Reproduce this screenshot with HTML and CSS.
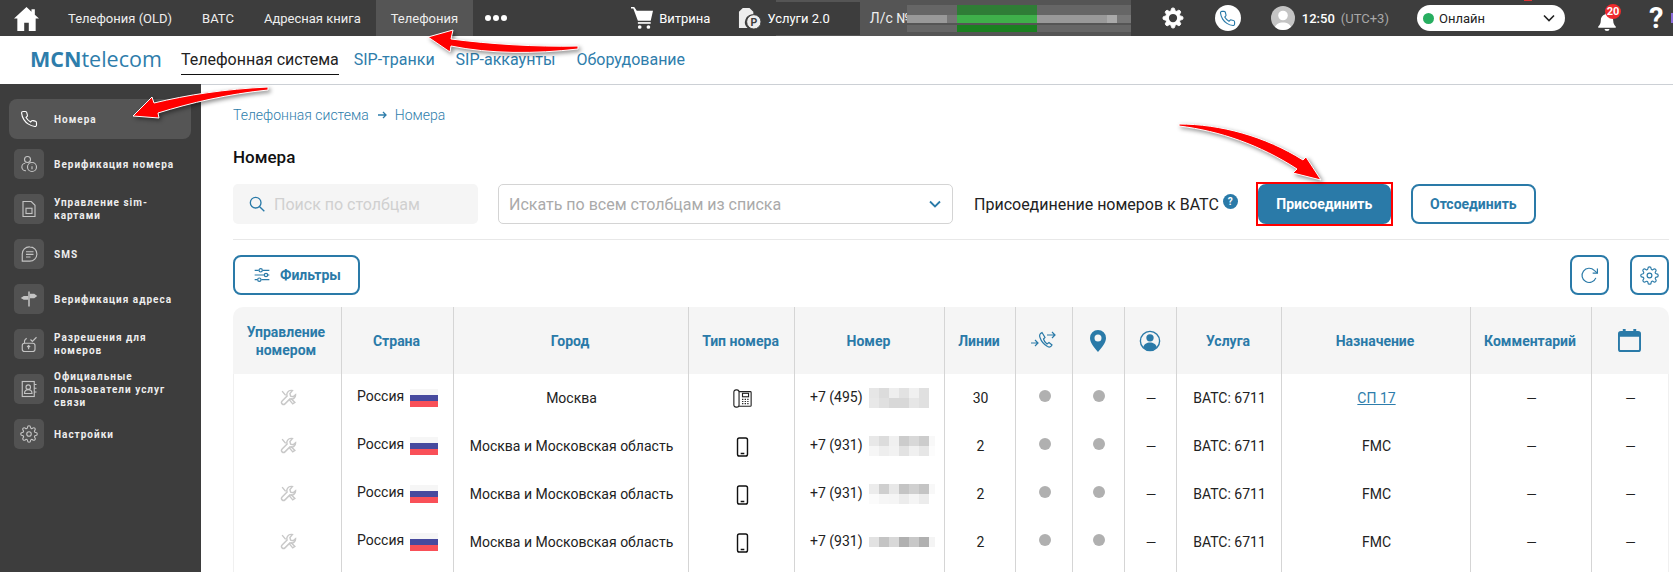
FILE: index.html
```html
<!DOCTYPE html>
<html>
<head>
  <meta charset="utf-8">
  <link rel="stylesheet" href="styles.css">
</head>
<body>
  <svg class="defs" width="0" height="0">
    <symbol id="i-phone" viewBox="0 0 24 24"><path d="M22 16.92v3a2 2 0 0 1-2.18 2 19.79 19.79 0 0 1-8.63-3.07 19.5 19.5 0 0 1-6-6 19.79 19.79 0 0 1-3.07-8.67A2 2 0 0 1 4.11 2h3a2 2 0 0 1 2 1.72 12.84 12.84 0 0 0 .7 2.81 2 2 0 0 1-.45 2.11L8.09 9.91a16 16 0 0 0 6 6l1.27-1.27a2 2 0 0 1 2.11-.45 12.84 12.84 0 0 0 2.81.7A2 2 0 0 1 22 16.92z"/></symbol>
    <symbol id="i-gear" viewBox="0 0 24 24"><circle cx="12" cy="12" r="3"/><path d="M19.4 15a1.65 1.65 0 0 0 .33 1.82l.06.06a2 2 0 0 1 0 2.83 2 2 0 0 1-2.83 0l-.06-.06a1.65 1.65 0 0 0-1.82-.33 1.65 1.65 0 0 0-1 1.51V21a2 2 0 0 1-2 2 2 2 0 0 1-2-2v-.09A1.65 1.65 0 0 0 9 19.4a1.65 1.65 0 0 0-1.82.33l-.06.06a2 2 0 0 1-2.83 0 2 2 0 0 1 0-2.83l.06-.06a1.65 1.65 0 0 0 .33-1.82 1.65 1.65 0 0 0-1.51-1H3a2 2 0 0 1-2-2 2 2 0 0 1 2-2h.09A1.65 1.65 0 0 0 4.6 9a1.65 1.65 0 0 0-.33-1.82l-.06-.06a2 2 0 0 1 0-2.83 2 2 0 0 1 2.83 0l.06.06a1.65 1.65 0 0 0 1.82.33H9a1.65 1.65 0 0 0 1-1.51V3a2 2 0 0 1 2-2 2 2 0 0 1 2 2v.09a1.65 1.65 0 0 0 1 1.51 1.65 1.65 0 0 0 1.82-.33l.06-.06a2 2 0 0 1 2.83 0 2 2 0 0 1 0 2.83l-.06.06a1.65 1.65 0 0 0-.33 1.82V9a1.65 1.65 0 0 0 1.51 1H21a2 2 0 0 1 2 2 2 2 0 0 1-2 2h-.09a1.65 1.65 0 0 0-1.51 1z"/></symbol>
    <symbol id="i-wrench" viewBox="0 0 24 24"><path d="M16 2a6 6 0 0 0-6 8L3 17a2.800 2.800 0 0 0 4 4l7-7a6 6 0 0 0 8-6l-3.500 3-3.500-1-1-3.500L17.500 2.200z"/><path d="M3 3l5 6M13 15l5 6 3-2-6-6"/></symbol>
    <symbol id="i-mobile" viewBox="0 0 14 22"><rect x="1.500" y="1" width="11" height="20" rx="2"/><path d="M5 18.200h4" stroke-width="1.800"/></symbol>
    <symbol id="i-desk" viewBox="0 0 22 22"><rect x="1" y="1" width="6" height="20" rx="2.500"/><path d="M7 3h13a1 1 0 0 1 1 1v15a1 1 0 0 1-1 1H7"/><rect x="11" y="5" width="7" height="4"/><path d="M10.500 12h1.500m1.500 0H15m1.500 0H18M10.500 14.500h1.500m1.500 0H15m1.500 0H18M10.500 17h1.500m1.500 0H15m1.500 0H18"/></symbol>
  </svg>

  <div class="page">
    <header class="topbar">
      <svg class="home" viewBox="0 0 24 24"><path d="M12 1 0 12h3.200v12h6.600v-8h4.400v8h6.600V12H24l-4-3.700V3h-3.200v2.400z"/></svg>
      <nav class="topnav">
        <a>Телефония (OLD)</a>
        <a>ВАТС</a>
        <a>Адресная книга</a>
        <a class="active">Телефония</a>
      </nav>
      <div class="dots"><i></i><i></i><i></i></div>

      <svg class="cart" viewBox="0 0 24 24"><path d="M0 0h3.500l2.800 4H24l-2.500 11H7.500L2.500 1.600H0z"/><rect x="7.500" y="16.500" width="14" height="1.800"/><circle cx="9.500" cy="21.800" r="2"/><circle cx="19" cy="21.800" r="2"/></svg>
      <span class="top-link">Витрина</span>
      <svg class="services" viewBox="0 0 24 24"><path d="M5 1h7l4 4v3a8 8 0 0 0-6 14H1V5z"/><circle cx="16.500" cy="15.500" r="7.500"/><text x="16.500" y="19.500" text-anchor="middle" class="services-p">P</text></svg>
      <span class="top-link">Услуги 2.0</span>

      <div class="account">
        <span class="account-label">Л/с №</span>
        <span class="account-blur"></span>
      </div>

      <svg class="top-gear" viewBox="0 0 24 24"><use href="#i-gear"/><circle class="top-gear-hole" cx="12" cy="12" r="4.500"/></svg>
      <span class="call-btn"><svg viewBox="0 0 24 24"><use href="#i-phone"/></svg></span>
      <span class="avatar"><svg viewBox="0 0 24 24"><circle cx="12" cy="9.500" r="4.800"/><path d="M3 24c1-6 5-7.500 9-7.500s8 1.500 9 7.500z"/></svg></span>
      <span class="clock">12:50</span>
      <span class="zone">(UTC+3)</span>
      <div class="status">
        <i class="status-dot"></i>
        <span>Онлайн</span>
        <svg viewBox="0 0 12 8"><path d="M1 1.500 6 6.500l5-5"/></svg>
      </div>
      <div class="bell">
        <svg viewBox="0 0 24 24"><path d="M12 2a2 2 0 0 1 2 2c4 1 5.500 4 5.500 8 0 3 1.500 5 3 6.500v1.500h-21v-1.500c1.500-1.500 3-3.500 3-6.500 0-4 1.500-7 5.500-8a2 2 0 0 1 2-2z"/><path d="M9 21.500h6a3 2.500 0 0 1-6 0z"/></svg>
        <b class="badge">20</b>
      </div>
      <span class="question">?</span>
    </header>

    <div class="subbar">
      <div class="logo"><b>MCN</b>telecom</div>
      <a class="tab active">Телефонная система</a>
      <a class="tab">SIP-транки</a>
      <a class="tab">SIP-аккаунты</a>
      <a class="tab">Оборудование</a>
    </div>

    <div class="main">
      <aside class="sidebar">
        <a class="side-item active">
          <span class="side-icon"><svg viewBox="0 0 24 24"><use href="#i-phone"/></svg></span>
          <span>Номера</span>
        </a>
        <a class="side-item">
          <span class="side-icon"><svg viewBox="0 0 24 24"><circle cx="10" cy="6" r="4"/><path d="M8 21a5 5 0 0 1-1-10"/><circle cx="16" cy="16" r="6"/><path d="M16 15v4M16 12.500v.5"/></svg></span>
          <span>Верификация номера</span>
        </a>
        <a class="side-item">
          <span class="side-icon"><svg viewBox="0 0 24 24"><path d="M4 2h11l5 5v15H4z"/><rect x="8" y="11" width="8" height="7"/></svg></span>
          <span>Управление sim-картами</span>
        </a>
        <a class="side-item">
          <span class="side-icon"><svg viewBox="0 0 24 24"><path d="M13 2.500a9.500 9.500 0 1 1 0 19H3v-9A9.500 9.500 0 0 1 13 2.500z"/><path d="M8 9h10M8 12.500h10M8 16h6"/></svg></span>
          <span>SMS</span>
        </a>
        <a class="side-item">
          <span class="side-icon"><svg class="solid" viewBox="0 0 24 24"><path d="M11 2h2v20h-2z"/><path d="M13 5h6l4 3-4 3h-6zM11 8H5L1 10.500 5 13h6z"/></svg></span>
          <span>Верификация адреса</span>
        </a>
        <a class="side-item">
          <span class="side-icon"><svg viewBox="0 0 24 24"><rect x="3" y="11" width="17" height="11" rx="3"/><path d="M11.500 19v-5M9.500 16l2-2 2 2M6 11V8a5 5 0 0 1 3-3.500M14 6l2.500 2.500L22 3"/></svg></span>
          <span>Разрешения для номеров</span>
        </a>
        <a class="side-item">
          <span class="side-icon"><svg viewBox="0 0 24 24"><rect x="3" y="2" width="16" height="20"/><circle cx="11" cy="9.500" r="3"/><path d="M6 18c0-7 10-7 10 0zM19 6h3M19 11h3M19 16h3"/></svg></span>
          <span>Официальные пользователи услуг связи</span>
        </a>
        <a class="side-item">
          <span class="side-icon"><svg viewBox="0 0 24 24"><use href="#i-gear"/></svg></span>
          <span>Настройки</span>
        </a>
      </aside>

      <main class="content">
        <div class="breadcrumbs">
          <a>Телефонная система</a>
          <svg class="crumb-arrow" viewBox="0 0 9 8"><path d="M0 4h8M5 1l3 3-3 3"/></svg>
          <a>Номера</a>
        </div>
        <h1 class="title">Номера</h1>

        <div class="toolbar">
          <div class="search">
            <svg viewBox="0 0 24 24"><circle cx="10" cy="10" r="8"/><path d="m16 16 7 7"/></svg>
            <span>Поиск по столбцам</span>
          </div>
          <div class="column-select">
            <span>Искать по всем столбцам из списка</span>
            <svg viewBox="0 0 12 8"><path d="M1 1.500 6 6.500l5-5"/></svg>
          </div>
          <span class="attach-label">Присоединение номеров к ВАТС</span>
          <span class="help">?</span>
          <div class="highlight"><button class="btn btn-primary">Присоединить</button></div>
          <button class="btn btn-detach">Отсоединить</button>
        </div>

        <div class="actions">
          <button class="btn btn-filter">
            <svg viewBox="0 0 24 24"><path d="M1 5h6m6 0h10M1 12h14m6 0h2M1 19h4m6 0h12"/><circle cx="10" cy="5" r="2.500"/><circle cx="18" cy="12" r="2.500"/><circle cx="8" cy="19" r="2.500"/></svg>
            Фильтры
          </button>
          <div class="action-icons">
            <button class="btn btn-icon"><svg viewBox="0 0 24 24"><path d="M20 15a9 9 0 1 1-2-9.500L22 9"/><path d="M22 3v6h-6"/></svg></button>
            <button class="btn btn-icon"><svg viewBox="0 0 24 24"><use href="#i-gear"/></svg></button>
          </div>
        </div>

        <table class="numbers">
          <colgroup>
            <col class="c1"><col class="c2"><col class="c3"><col class="c4"><col class="c5"><col class="c6"><col class="c7">
            <col class="c8"><col class="c9"><col class="c10"><col class="c11"><col class="c12"><col class="c13">
          </colgroup>
          <thead>
            <tr>
              <th>Управление номером</th>
              <th>Страна</th>
              <th>Город</th>
              <th>Тип номера</th>
              <th>Номер</th>
              <th>Линии</th>
              <th><svg class="th-flow" viewBox="0 0 26 20"><path d="M1 12h7M5 9l3 3-3 3M17 4h8M22 1l3 3-3 3"/><path d="M12 1.500c-2 1-3 2.500-2 5 1 3 4 7 7.500 9 2 1 3.500.5 4.500-1.500l-3-2.500-2 1.500c-1.500-1-3-3-3.500-5l1.500-1.500z"/></svg></th>
              <th><svg class="th-pin" viewBox="0 0 16 22"><path fill-rule="evenodd" d="M8 0a8 8 0 0 1 8 8c0 5-4 9-8 14C4 17 0 13 0 8a8 8 0 0 1 8-8zm0 4.500a3.500 3.500 0 1 0 0 7 3.500 3.500 0 0 0 0-7z"/></svg></th>
              <th><svg class="th-user" viewBox="0 0 24 24"><circle class="user-ring" cx="12" cy="12" r="10.500"/><circle cx="12" cy="8.500" r="4"/><path d="M4.500 19c1-4 4-5.500 7.500-5.500s6.500 1.500 7.500 5.500a10.500 10.500 0 0 1-15 0z"/></svg></th>
              <th>Услуга</th>
              <th>Назначение</th>
              <th>Комментарий</th>
              <th><svg class="th-cal" viewBox="0 0 24 24"><path d="M5 0h3v2h8V0h3v2h2a3 3 0 0 1 3 3v16a3 3 0 0 1-3 3H3a3 3 0 0 1-3-3V5a3 3 0 0 1 3-3h2zM2 8v13a1 1 0 0 0 1 1h18a1 1 0 0 0 1-1V8z"/></svg></th>
            </tr>
          </thead>
          <tbody>
            <tr>
              <td><svg class="wrench" viewBox="0 0 24 24"><use href="#i-wrench"/></svg></td>
              <td class="left">Россия<span class="flag"></span></td>
              <td>Москва</td>
              <td><svg class="desk" viewBox="0 0 22 22"><use href="#i-desk"/></svg></td>
              <td class="left">+7 (495)<span class="blur blur-1"></span></td>
              <td>30</td>
              <td><i class="dot"></i></td>
              <td><i class="dot"></i></td>
              <td class="dash">—</td>
              <td>ВАТС: 6711</td>
              <td><a class="link">СП 17</a></td>
              <td class="dash">—</td>
              <td class="dash">—</td>
            </tr>
            <tr>
              <td><svg class="wrench" viewBox="0 0 24 24"><use href="#i-wrench"/></svg></td>
              <td class="left">Россия<span class="flag"></span></td>
              <td>Москва и Московская область</td>
              <td><svg class="mobile" viewBox="0 0 14 22"><use href="#i-mobile"/></svg></td>
              <td class="left">+7 (931)<span class="blur blur-2"></span></td>
              <td>2</td>
              <td><i class="dot"></i></td>
              <td><i class="dot"></i></td>
              <td class="dash">—</td>
              <td>ВАТС: 6711</td>
              <td>FMC</td>
              <td class="dash">—</td>
              <td class="dash">—</td>
            </tr>
            <tr>
              <td><svg class="wrench" viewBox="0 0 24 24"><use href="#i-wrench"/></svg></td>
              <td class="left">Россия<span class="flag"></span></td>
              <td>Москва и Московская область</td>
              <td><svg class="mobile" viewBox="0 0 14 22"><use href="#i-mobile"/></svg></td>
              <td class="left">+7 (931)<span class="blur blur-3"></span></td>
              <td>2</td>
              <td><i class="dot"></i></td>
              <td><i class="dot"></i></td>
              <td class="dash">—</td>
              <td>ВАТС: 6711</td>
              <td>FMC</td>
              <td class="dash">—</td>
              <td class="dash">—</td>
            </tr>
            <tr>
              <td><svg class="wrench" viewBox="0 0 24 24"><use href="#i-wrench"/></svg></td>
              <td class="left">Россия<span class="flag"></span></td>
              <td>Москва и Московская область</td>
              <td><svg class="mobile" viewBox="0 0 14 22"><use href="#i-mobile"/></svg></td>
              <td class="left">+7 (931)<span class="blur blur-4"></span></td>
              <td>2</td>
              <td><i class="dot"></i></td>
              <td><i class="dot"></i></td>
              <td class="dash">—</td>
              <td>ВАТС: 6711</td>
              <td>FMC</td>
              <td class="dash">—</td>
              <td class="dash">—</td>
            </tr>
            <tr>
              <td></td><td></td><td></td><td></td><td></td><td></td><td></td><td></td><td></td><td></td><td></td><td></td><td></td>
            </tr>
          </tbody>
        </table>
      </main>
    </div>

    <!-- red annotation arrows drawn over the screenshot -->
    <svg class="annotations" viewBox="0 0 1673 572">
      <path d="M578 46C535 47 490 44 451 39L453 30 428 37 450 52 451 46C490 54 535 54 578 49z"/>
      <path d="M268 87C225 89 187 95 154 103L152 97 133 116 159 118 158 113C190 103 228 94 268 90z"/>
      <path d="M1179 124C1220 124 1265 136 1303 160L1306 157 1321 180 1293 173 1297 169C1260 145 1220 131 1179 126z"/>
    </svg>
  </div>
</body>
</html>
```

FILE: styles.css
```css
* {
  box-sizing: border-box;
}

html, body {
  margin: 0;
  height: 572px;
  overflow: hidden;
  background-color: #fff;
  font-family: Roboto, "Liberation Sans", sans-serif;
  font-size: 14px;
  color: #222;
}

a {
  text-decoration: none;
}

.defs {
  display: block;
  height: 0;
}

.page {
  position: relative;
  width: 1673px;
  height: 572px;
  overflow: hidden;
}

/* top bar */
.topbar {
  position: relative;
  display: flex;
  align-items: center;
  height: 36px;
  background:
    linear-gradient(#555, #555) 776px 0 / 84px 2px no-repeat,
    linear-gradient(#555, #555) 776px 35px / 84px 1px no-repeat,
    linear-gradient(#d33, #d33) 1524px 0 / 8px 1px no-repeat,
    linear-gradient(#8a6cd8, #8a6cd8) 1671px 13px / 2px 10px no-repeat,
    #3d3d3d;
  color: #eee;
  font-size: 13px;
  white-space: nowrap;
  overflow: hidden;
}

.home {
  width: 25px;
  height: 25px;
  margin-left: 14px;
  fill: #fff;
  flex: none;
}

.topnav {
  display: flex;
  height: 36px;
  margin-left: 14px;
  flex: none;
}

.topnav a {
  display: flex;
  align-items: center;
  padding: 0 15px;
  font-size: 13px;
}

.topnav a.active {
  background-color: #555;
}

.dots {
  display: flex;
  gap: 2px;
  margin-left: 12px;
  flex: none;
}

.dots i {
  width: 6px;
  height: 6px;
  border-radius: 50%;
  background-color: #fff;
}

.cart {
  width: 22px;
  height: 22px;
  margin-left: 124px;
  fill: #fff;
  flex: none;
}

.top-link {
  margin-left: 6px;
  color: #fff;
  font-weight: 400;
  flex: none;
}

.services {
  width: 23px;
  height: 23px;
  margin-left: 28px;
  fill: #eee;
  flex: none;
}

.services circle {
  stroke: #3d3d3d;
  stroke-width: 1;
}

.services-p {
  font-size: 11px;
  font-weight: 700;
  fill: #3d3d3d;
}

.account {
  display: flex;
  align-items: center;
  width: 271px;
  height: 36px;
  margin-left: 30px;
  padding-left: 10px;
  background-color: #555;
  font-size: 14px;
  flex: none;
}

.account-label {
  width: 37px;
  flex: none;
}

.account-blur {
  width: 224px;
  height: 27px;
  flex: none;
  background:
    linear-gradient(90deg, #666 0 50px, #2f7d36 50px 130px, #666 130px) top / 100% 10px no-repeat,
    linear-gradient(90deg, #999 0 40px, #777 40px 50px, #3fb04a 50px 130px, #999 130px 200px, #aaa 200px 210px, #777 210px) center / 100% 10px no-repeat,
    linear-gradient(90deg, #666 0 50px, #1a8020 50px 130px, #666 130px) bottom / 100% 7px no-repeat;
}

.top-gear {
  width: 22px;
  height: 24px;
  margin-left: 31px;
  fill: #fff;
  stroke: #fff;
  stroke-width: 1;
  flex: none;
}

.top-gear-hole {
  fill: #3d3d3d;
  stroke: none;
}

.call-btn {
  display: flex;
  align-items: center;
  justify-content: center;
  width: 26px;
  height: 26px;
  margin-left: 31px;
  border-radius: 50%;
  background-color: #fff;
  flex: none;
}

.call-btn svg {
  width: 17px;
  height: 17px;
  fill: none;
  stroke: #2a7aa8;
  stroke-width: 1.600;
}

.avatar {
  width: 24px;
  height: 24px;
  margin-left: 30px;
  border-radius: 50%;
  background-color: #c4c4c4;
  overflow: hidden;
  flex: none;
}

.avatar svg {
  display: block;
  fill: #fff;
}

.clock {
  margin-left: 7px;
  color: #fff;
  font-size: 13px;
  font-weight: 500;
  flex: none;
}

.zone {
  margin-left: 6px;
  color: #a8a8a8;
  font-size: 13px;
  flex: none;
}

.status {
  display: flex;
  align-items: center;
  width: 148px;
  height: 26px;
  margin-left: 28px;
  padding: 0 10px 0 6px;
  border-radius: 13px;
  background-color: #fff;
  color: #222;
  font-size: 13px;
  flex: none;
}

.status-dot {
  width: 11px;
  height: 11px;
  margin-right: 5px;
  border-radius: 50%;
  background-color: #27ae60;
}

.status svg {
  width: 12px;
  height: 8px;
  margin-left: auto;
  fill: none;
  stroke: #222;
  stroke-width: 1.600;
}

.bell {
  position: relative;
  width: 20px;
  height: 25px;
  margin-left: 32px;
  flex: none;
}

.bell svg {
  position: absolute;
  left: 0;
  top: 4px;
  width: 20px;
  height: 22px;
  fill: #fff;
}

.badge {
  position: absolute;
  left: 8px;
  top: -2px;
  width: 16px;
  height: 15px;
  border-radius: 50%;
  background-color: #ef2b2d;
  color: #fff;
  font-size: 11px;
  line-height: 15px;
  text-align: center;
}

.question {
  margin-left: 32px;
  color: #fff;
  font-size: 29px;
  font-weight: 700;
  line-height: 36px;
  flex: none;
}

/* second bar */
.subbar {
  display: flex;
  align-items: flex-start;
  height: 49px;
  padding-left: 30px;
  border-bottom: 1px solid #ccd0d5;
}

.logo {
  margin-top: 9px;
  width: 151px;
  color: #2e7dab;
  font-family: "Open Sans", sans-serif;
  font-size: 21.500px;
  line-height: 28px;
  white-space: nowrap;
}

.tab {
  margin-top: 15px;
  margin-right: 21px;
  height: 24px;
  color: #2e7dab;
  font-size: 16px;
  line-height: 18px;
}

.tab.active {
  margin-right: 15px;
  color: #222;
  border-bottom: 1px solid #111;
}

/* sidebar */
.main {
  display: flex;
  height: 488px;
  margin-top: -1px;
}

.sidebar {
  display: flex;
  flex-direction: column;
  gap: 5px;
  width: 201px;
  padding: 15px 10px 0 9px;
  background-color: #3d3d3d;
  flex: none;
}

.side-item {
  display: flex;
  align-items: center;
  gap: 10px;
  height: 40px;
  padding: 5px;
  border-radius: 8px;
  color: #eee;
  font-size: 10px;
  font-weight: 700;
  letter-spacing: 1px;
  line-height: 13px;
}

.side-item.active {
  background-color: #555;
}

.side-icon {
  display: flex;
  align-items: center;
  justify-content: center;
  width: 30px;
  height: 30px;
  border-radius: 5px;
  background-color: #525252;
  flex: none;
}

.side-item.active .side-icon {
  background-color: transparent;
}

.side-icon svg {
  width: 18px;
  height: 18px;
  fill: none;
  stroke: #c4c4c4;
  stroke-width: 1.500;
}

.side-item.active .side-icon svg {
  stroke: #fff;
}

.side-icon svg.solid {
  fill: #c4c4c4;
  stroke: none;
}

/* content */
.content {
  flex: 1;
  padding: 22px 4px 0 32px;
  min-width: 0;
}

.breadcrumbs {
  display: flex;
  align-items: center;
  height: 18px;
  color: #2e7dab;
  font-size: 14px;
  font-weight: 300;
}

.crumb-arrow {
  width: 9px;
  height: 8px;
  margin: 0 8px 0 9px;
  fill: none;
  stroke: #2e7dab;
  stroke-width: 1.300;
}

.title {
  margin: 23px 0 0;
  color: #111;
  font-size: 17px;
  font-weight: 500;
  line-height: 20px;
}

.toolbar {
  display: flex;
  align-items: center;
  height: 56px;
  margin-top: 17px;
  padding-bottom: 15px;
  border-bottom: 1px solid #e8e8e8;
}

.search {
  display: flex;
  align-items: center;
  gap: 9px;
  width: 245px;
  height: 40px;
  padding-left: 16px;
  border-radius: 5px;
  background-color: #f5f5f5;
  color: #d0d0d0;
  font-size: 16px;
}

.search svg {
  width: 16px;
  height: 16px;
  fill: none;
  stroke: #2a7aa8;
  stroke-width: 2;
}

.column-select {
  display: flex;
  align-items: center;
  justify-content: space-between;
  width: 455px;
  height: 40px;
  margin-left: 20px;
  padding: 0 11px 0 10px;
  border: 1px solid #d4d4d4;
  border-radius: 5px;
  color: #aaa;
  font-size: 16px;
}

.column-select svg {
  width: 12px;
  height: 8px;
  fill: none;
  stroke: #2a7aa8;
  stroke-width: 1.800;
}

.attach-label {
  margin-left: 21px;
  color: #222;
  font-size: 16px;
  white-space: nowrap;
}

.help {
  width: 15px;
  height: 15px;
  margin: 0 0 5px 4px;
  border-radius: 50%;
  background-color: #2a7aa8;
  color: #fff;
  font-size: 10px;
  font-weight: 700;
  line-height: 15px;
  text-align: center;
  flex: none;
}

.btn {
  height: 40px;
  border: 2px solid #2a7aa8;
  border-radius: 8px;
  background-color: #fff;
  color: #2a7aa8;
  font-family: Roboto, sans-serif;
  font-size: 14px;
  font-weight: 700;
  padding: 0;
  flex: none;
}

.highlight {
  width: 137px;
  height: 44px;
  margin-left: 18px;
  border: 2px solid #f00;
  flex: none;
}

.btn-primary {
  display: block;
  width: 133px;
  background-color: #2a7aa8;
  color: #fff;
}

.btn-detach {
  width: 125px;
  margin-left: 18px;
}

.actions {
  display: flex;
  align-items: center;
  justify-content: space-between;
  height: 40px;
  margin-top: 15px;
}

.btn-filter {
  display: flex;
  align-items: center;
  gap: 10px;
  width: 127px;
  padding-left: 19px;
}

.btn-filter svg {
  width: 16px;
  height: 16px;
  fill: none;
  stroke: #2a7aa8;
  stroke-width: 1.800;
}

.action-icons {
  display: flex;
  gap: 21px;
}

.btn-icon {
  display: flex;
  align-items: center;
  justify-content: center;
  width: 39px;
}

.btn-icon svg {
  width: 19px;
  height: 19px;
  fill: none;
  stroke: #2a7aa8;
  stroke-width: 1.500;
}

/* table */
.numbers {
  width: 1436px;
  margin-top: 12px;
  table-layout: fixed;
  border-collapse: separate;
  border-spacing: 0;
}

.c1 { width: 109px; }
.c2 { width: 112px; }
.c3 { width: 235px; }
.c4 { width: 106px; }
.c5 { width: 150px; }
.c6 { width: 71px; }
.c7 { width: 57px; }
.c8 { width: 52px; }
.c9 { width: 52px; }
.c10 { width: 105px; }
.c11 { width: 189px; }
.c12 { width: 121px; }
.c13 { width: 77px; }

.numbers th {
  height: 67px;
  padding: 0 10px 0 8px;
  background-color: #f5f5f5;
  border-right: 1px solid #d5d5d5;
  color: #2a7aa8;
  font-size: 14px;
  font-weight: 700;
  line-height: 18px;
}

.numbers th:first-child {
  border-top-left-radius: 10px;
}

.numbers th:last-child {
  border-top-right-radius: 10px;
  border-right: none;
}

.numbers td {
  height: 48px;
  padding: 0 0 1px 1px;
  border-right: 1px solid #d5d5d5;
  font-size: 14px;
  text-align: center;
  white-space: nowrap;
}

.numbers td:first-child {
  border-left: 1px solid #f0f0f0;
}

.numbers td:last-child {
  border-right: 1px solid #f0f0f0;
}

.numbers td.left {
  padding-left: 15px;
  text-align: left;
}

.numbers td.dash {
  font-size: 13.500px;
}

.numbers svg {
  vertical-align: middle;
}

.th-flow {
  width: 26px;
  height: 20px;
  fill: none;
  stroke: #2a7aa8;
  stroke-width: 1.200;
}

.th-pin {
  width: 16px;
  height: 22px;
  fill: #2a7aa8;
}

.th-user {
  width: 22px;
  height: 22px;
  fill: #2a7aa8;
}

.user-ring {
  fill: none;
  stroke: #2a7aa8;
  stroke-width: 1.500;
}

.th-cal {
  width: 23px;
  height: 23px;
  fill: #2a7aa8;
}

.wrench {
  width: 17px;
  height: 17px;
  fill: none;
  stroke: #c8c8c8;
  stroke-width: 2;
}

.desk {
  width: 19px;
  height: 19px;
  margin-top: 2px;
  fill: none;
  stroke: #222;
  stroke-width: 1.300;
}

.mobile {
  width: 13px;
  height: 20px;
  margin-top: 2px;
  fill: none;
  stroke: #111;
  stroke-width: 1.600;
}

.flag {
  display: inline-block;
  width: 28px;
  height: 18px;
  margin-left: 6px;
  vertical-align: middle;
  background: linear-gradient(#f6f6f6 0 6px, #474a9e 6px 12px, #f95058 12px);
}

.dot {
  display: block;
  width: 12px;
  height: 12px;
  margin: 0 auto 4px;
  border-radius: 50%;
  background-color: #b0b0b0;
}

.link {
  color: #2e7dab;
  text-decoration: underline;
}

/* pixelated phone numbers */
.blur {
  display: inline-block;
  width: 66px;
  height: 20px;
  margin-left: 6px;
  vertical-align: middle;
}

.blur-1 {
  background:
    linear-gradient(90deg, #e6e6e6 0 10px, #dcdcdc 10px 20px, #eee 20px 30px, #e2e2e2 30px 40px, #f0f0f0 40px 50px, #e0e0e0 50px 60px, #fff 60px) top / 100% 10px no-repeat,
    linear-gradient(90deg, #e8e8e8 0 10px, #e0e0e0 10px 20px, #d8d8d8 20px 40px, #e6e6e6 40px 50px, #e0e0e0 50px 60px, #fff 60px) bottom / 100% 10px no-repeat;
}

.blur-2 {
  background:
    linear-gradient(90deg, #e8e8e8 0 10px, #dcdcdc 10px 20px, #f0f0f0 20px 30px, #ccc 30px 40px, #d8d8d8 40px 50px, #ccc 50px 60px, #f8f8f8 60px) top / 100% 10px no-repeat,
    linear-gradient(90deg, #f6f6f6 0 10px, #eee 10px 20px, #f2f2f2 20px 30px, #e2e2e2 30px 40px, #f0f0f0 40px 50px, #e6e6e6 50px 60px, #fcfcfc 60px) bottom / 100% 10px no-repeat;
}

.blur-3 {
  background:
    linear-gradient(90deg, #ececec 0 10px, #cfcfcf 10px 20px, #e8e8e8 20px 30px, #c4c4c4 30px 40px, #d0d0d0 40px 50px, #c4c4c4 50px 60px, #f8f8f8 60px) top / 100% 10px no-repeat,
    linear-gradient(90deg, #fbfbfb 0 10px, #f6f6f6 10px 20px, #f5f5f5 20px 30px, #ececec 30px 40px, #f5f5f5 40px 50px, #ececec 50px 60px, #fff 60px) bottom / 100% 10px no-repeat;
}

.blur-4 {
  background: linear-gradient(90deg, #e2e2e2 0 10px, #c4c4c4 10px 20px, #d8d8d8 20px 30px, #b0b0b0 30px 40px, #c8c8c8 40px 50px, #b0b0b0 50px 60px, #f4f4f4 60px) center / 100% 10px no-repeat;
}

/* annotation overlay */
.annotations {
  position: absolute;
  left: 0;
  top: 0;
  width: 1673px;
  height: 572px;
  pointer-events: none;
  filter: drop-shadow(2px 2px 2px rgba(0, 0, 0, 0.45));
}

.annotations path {
  fill: #f00;
  stroke: #fff;
  stroke-width: 1;
}
```
